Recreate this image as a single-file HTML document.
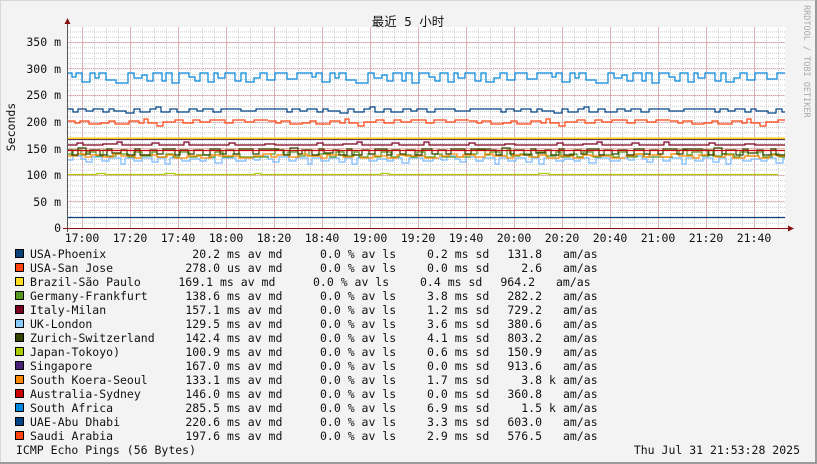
<!DOCTYPE html>
<html><head><meta charset="utf-8">
<style>
html,body{margin:0;padding:0;background:#f3f3f3;}
svg{display:block}
text{font-family:"DejaVu Sans Mono","Liberation Mono",monospace;font-size:11.5px;fill:#111}
</style></head><body>
<svg width="817" height="464" viewBox="0 0 817 464" xmlns="http://www.w3.org/2000/svg">
<defs>
<pattern id="hg" x="0" y="228" width="10" height="5.314" patternUnits="userSpaceOnUse">
<line x1="0" y1="0.5" x2="10" y2="0.5" stroke="#c8c8c8" stroke-width="1" stroke-dasharray="1,1"/>
</pattern>
<pattern id="vg" x="70" y="0" width="12" height="10" patternUnits="userSpaceOnUse">
<line x1="0.5" y1="0" x2="0.5" y2="10" stroke="#c8c8c8" stroke-width="1" stroke-dasharray="1,1"/>
</pattern>
<clipPath id="pc"><rect x="67" y="27" width="718" height="201"/></clipPath>
<path id="sa" d="M0 73 h5 v4 h4 v-4 h6 v9 h8 v-9 h5 v5 h4 v-5 h7 v7 h10 v3 h12 v-10 h6 v5 h8 v-3 h5 v6 h6 v-8 h9 v8 h4 v-8 h6 v10 h7 v-10 h10 v4 h6 v4 h5 v-8 h8 v9 h6 v-9 h4 v5 h7 v-5 h10 v8 h6 v-8 h5 v9 h8 v-4 h6 v-5 h7 v7 h8 v-7 h12 v6 h10 v-6 h10"/>
<path id="uae" d="M0 109 h6 v3 h5 v-3 h8 v2 h7 v-2 h10 v3 h6 v-3 h5 v2 h12 v2 h8 v-4 h6 v3 h10 v-3 h6 v-2 h5 v5 h9 v-3 h7 v3 h12 v-3 h8 v2 h6 v-2 h10 v3 h8 v-3 h20 v2 h15 v-2 h25"/>
<path id="sd" d="M0 121 h8 v2 h5 v-2 h9 v3 h12 v-1 h8 v-2 h6 v3 h14 v-3 h10 v2 h5 v-4 h4 v4 h9 v3 h6 v-4 h12 v-2 h8 v3 h10 v-3 h7 v2 h10 v-2 h15 v3 h8 v-3 h12 v2 h9 v-2 h14"/>
<path id="it" d="M0 145 h10 v-2 h6 v2 h20 v-1 h14 v-2 h5 v3 h30 v-2 h7 v2 h25 v-3 h5 v3 h40 v-2 h6 v2 h30 v-1 h10 v1 h32"/>
<path id="zu" d="M0 150 h5 v5 h6 v-7 h8 v6 h4 v-4 h10 v5 h7 v-6 h5 v4 h9 v-3 h6 v5 h8 v-6 h5 v6 h10 v-5 h7 v4 h6 v-5 h12 v6 h5 v-5 h8 v4 h6 v-4 h9 v5 h7 v-6 h10 v5 h6 v-4 h8 v4 h5 v-5 h14 v5 h6 v-5 h20"/>
<path id="ge" d="M0 154 h6 v-4 h8 v5 h5 v-3 h10 v4 h7 v-6 h4 v6 h9 v-2 h12 v3 h6 v-5 h8 v4 h10 v-4 h5 v5 h9 v-3 h7 v3 h6 v-5 h10 v5 h8 v-2 h12 v2 h6 v-5 h8 v5 h10 v-3 h7 v3 h29"/>
<path id="sk" d="M0 156 h10 v-2 h8 v3 h6 v-2 h12 v2 h10 v-3 h8 v2 h14 v2 h6 v-3 h16 v2 h10 v-2 h8 v3 h12 v-2 h14 v2 h10 v-3 h8 v1 h20 v2 h14"/>
<path id="uk" d="M0 160 h6 v-4 h8 v3 h5 v3 h6 v-5 h10 v4 h7 v-3 h12 v6 h4 v-6 h9 v3 h8 v-3 h10 v4 h6 v-4 h7 v6 h5 v-6 h12 v3 h8 v-2 h10 v2 h6 v-3 h9 v5 h7 v-5 h14 v3 h10 v-3 h8 v2"/>
</defs>
<rect x="0" y="0" width="817" height="464" fill="#f3f3f3"/>
<rect x="0.5" y="0.5" width="815" height="462" fill="none" stroke="#d8d8d8"/>
<line x1="0" y1="463" x2="817" y2="463" stroke="#9a9a9a" stroke-width="2"/>
<line x1="816" y1="0" x2="816" y2="464" stroke="#9a9a9a" stroke-width="2"/>
<rect x="67" y="27" width="718" height="201" fill="#ffffff"/>
<rect x="67" y="27" width="718" height="201" fill="url(#hg)"/>
<rect x="67" y="27" width="718" height="201" fill="url(#vg)"/>
<g stroke="#e8a0a0" stroke-width="1" stroke-dasharray="1,1">
<line x1="67" y1="201.5" x2="785" y2="201.5"/><line x1="67" y1="175.5" x2="785" y2="175.5"/><line x1="67" y1="148.5" x2="785" y2="148.5"/><line x1="67" y1="122.5" x2="785" y2="122.5"/><line x1="67" y1="95.5" x2="785" y2="95.5"/><line x1="67" y1="68.5" x2="785" y2="68.5"/><line x1="67" y1="42.5" x2="785" y2="42.5"/>
<line x1="82.5" y1="27" x2="82.5" y2="228"/><line x1="130.5" y1="27" x2="130.5" y2="228"/><line x1="178.5" y1="27" x2="178.5" y2="228"/><line x1="226.5" y1="27" x2="226.5" y2="228"/><line x1="274.5" y1="27" x2="274.5" y2="228"/><line x1="322.5" y1="27" x2="322.5" y2="228"/><line x1="370.5" y1="27" x2="370.5" y2="228"/><line x1="418.5" y1="27" x2="418.5" y2="228"/><line x1="466.5" y1="27" x2="466.5" y2="228"/><line x1="514.5" y1="27" x2="514.5" y2="228"/><line x1="562.5" y1="27" x2="562.5" y2="228"/><line x1="610.5" y1="27" x2="610.5" y2="228"/><line x1="658.5" y1="27" x2="658.5" y2="228"/><line x1="706.5" y1="27" x2="706.5" y2="228"/><line x1="754.5" y1="27" x2="754.5" y2="228"/>
</g>
<g clip-path="url(#pc)" fill="none" stroke-width="1.2">
<g transform="translate(67,0)" stroke="#0088dd"><use href="#sa"/><use href="#sa" x="240"/><use href="#sa" x="480"/><use href="#sa" x="720"/></g>
<g transform="translate(67,0)" stroke="#004488"><use href="#uae"/><use href="#uae" x="214"/><use href="#uae" x="428"/><use href="#uae" x="642"/></g>
<g transform="translate(67,0)" stroke="#ff4411"><use href="#sd"/><use href="#sd" x="201"/><use href="#sd" x="402"/><use href="#sd" x="603"/></g>
<line x1="67" y1="139.5" x2="785" y2="139.5" stroke="#4a2277"/>
<line x1="67" y1="138.3" x2="785" y2="138.3" stroke="#ffcc00" stroke-width="1.6"/>
<g transform="translate(67,0)" stroke="#800020"><use href="#it"/><use href="#it" x="240"/><use href="#it" x="480"/><use href="#it" x="720"/></g>
<g transform="translate(67,0)" stroke="#77bbff"><use href="#uk"/><use href="#uk" x="187"/><use href="#uk" x="374"/><use href="#uk" x="561"/></g>
<g transform="translate(67,0)" stroke="#559922"><use href="#ge"/><use href="#ge" x="202"/><use href="#ge" x="404"/><use href="#ge" x="606"/></g>
<g transform="translate(67,0)" stroke="#ff8800"><use href="#sk"/><use href="#sk" x="186"/><use href="#sk" x="372"/><use href="#sk" x="558"/></g>
<g transform="translate(67,0)" stroke="#334400"><use href="#zu"/><use href="#zu" x="212"/><use href="#zu" x="424"/><use href="#zu" x="636"/></g>
<line x1="67" y1="150.5" x2="785" y2="150.5" stroke="#cc0000"/>
<path d="M67 174.5 h30 v-1 h8 v1 h60 v-1 h10 v1 h80 v-1 h6 v1 h120 v-1 h8 v1 h150 v-1 h10 v1 h229" stroke="#aacc00"/>
<line x1="67" y1="217.5" x2="785" y2="217.5" stroke="#0a3f7a"/>
</g>
<line x1="67.5" y1="22" x2="67.5" y2="232" stroke="#555" stroke-width="1"/>
<line x1="63" y1="228.5" x2="790" y2="228.5" stroke="#881111" stroke-width="1"/>
<path d="M64.5 24 L67.5 18 L70.5 24 Z" fill="#881111"/>
<path d="M788 225.5 L794 228.5 L788 231.5 Z" fill="#881111"/>
<g text-anchor="end">
<text x="61" y="232">0</text>
<text x="61" y="206">50 m</text>
<text x="61" y="179">100 m</text>
<text x="61" y="153">150 m</text>
<text x="61" y="126">200 m</text>
<text x="61" y="99">250 m</text>
<text x="61" y="73">300 m</text>
<text x="61" y="46">350 m</text>
</g>
<g text-anchor="middle" style="font-size:11px">
<text x="82" y="242">17:00</text><text x="130" y="242">17:20</text><text x="178" y="242">17:40</text><text x="226" y="242">18:00</text><text x="274" y="242">18:20</text><text x="322" y="242">18:40</text><text x="370" y="242">19:00</text><text x="418" y="242">19:20</text><text x="466" y="242">19:40</text><text x="514" y="242">20:00</text><text x="562" y="242">20:20</text><text x="610" y="242">20:40</text><text x="658" y="242">21:00</text><text x="706" y="242">21:20</text><text x="754" y="242">21:40</text>
</g>
<text x="408" y="26" text-anchor="middle" style="font-family:'DejaVu Sans Mono','Noto Sans CJK SC',monospace;font-size:12.5px">最近 5 小时</text>
<text transform="translate(15,127) rotate(-90)" text-anchor="middle" style="font-size:11.5px">Seconds</text>
<text transform="translate(804,5) rotate(90)" style="font-size:8.5px;fill:#aaa">RRDTOOL / TOBI OETIKER</text>
<g stroke="#000" stroke-width="1">
<rect x="15.5" y="249.5" width="8" height="8" fill="#0a3f7a"/>
<rect x="15.5" y="263.5" width="8" height="8" fill="#ff4411"/>
<rect x="15.5" y="277.5" width="8" height="8" fill="#ffdd22"/>
<rect x="15.5" y="291.5" width="8" height="8" fill="#559922"/>
<rect x="15.5" y="305.5" width="8" height="8" fill="#7a0020"/>
<rect x="15.5" y="319.5" width="8" height="8" fill="#88ccff"/>
<rect x="15.5" y="333.5" width="8" height="8" fill="#334400"/>
<rect x="15.5" y="347.5" width="8" height="8" fill="#aacc00"/>
<rect x="15.5" y="361.5" width="8" height="8" fill="#4a2277"/>
<rect x="15.5" y="375.5" width="8" height="8" fill="#ff8800"/>
<rect x="15.5" y="389.5" width="8" height="8" fill="#cc0000"/>
<rect x="15.5" y="403.5" width="8" height="8" fill="#0088dd"/>
<rect x="15.5" y="417.5" width="8" height="8" fill="#004488"/>
<rect x="15.5" y="431.5" width="8" height="8" fill="#ff4411"/>
</g>
<g>
<text x="30" y="258">USA-Phoenix</text>
<text x="30" y="272">USA-San Jose</text>
<text x="30" y="286">Brazil-São Paulo</text>
<text x="30" y="300">Germany-Frankfurt</text>
<text x="30" y="314">Italy-Milan</text>
<text x="30" y="328">UK-London</text>
<text x="30" y="342">Zurich-Switzerland</text>
<text x="30" y="356">Japan-Tokoyo)</text>
<text x="30" y="370">Singapore</text>
<text x="30" y="384">South Koera-Seoul</text>
<text x="30" y="398">Australia-Sydney</text>
<text x="30" y="412">South Africa</text>
<text x="30" y="426">UAE-Abu Dhabi</text>
<text x="30" y="440">Saudi Arabia</text>
</g>
<g text-anchor="end">
<text x="220" y="258">20.2</text><text x="220" y="272">278.0</text><text x="213" y="286">169.1</text><text x="220" y="300">138.6</text><text x="220" y="314">157.1</text><text x="220" y="328">129.5</text><text x="220" y="342">142.4</text><text x="220" y="356">100.9</text><text x="220" y="370">167.0</text><text x="220" y="384">133.1</text><text x="220" y="398">146.0</text><text x="220" y="412">285.5</text><text x="220" y="426">220.6</text><text x="220" y="440">197.6</text>
</g>
<g>
<text x="227" y="258">ms av md</text><text x="227" y="272">us av md</text><text x="220" y="286">ms av md</text><text x="227" y="300">ms av md</text><text x="227" y="314">ms av md</text><text x="227" y="328">ms av md</text><text x="227" y="342">ms av md</text><text x="227" y="356">ms av md</text><text x="227" y="370">ms av md</text><text x="227" y="384">ms av md</text><text x="227" y="398">ms av md</text><text x="227" y="412">ms av md</text><text x="227" y="426">ms av md</text><text x="227" y="440">ms av md</text>
</g>
<g>
<text x="320" y="258">0.0 % av ls</text><text x="320" y="272">0.0 % av ls</text><text x="313" y="286">0.0 % av ls</text><text x="320" y="300">0.0 % av ls</text><text x="320" y="314">0.0 % av ls</text><text x="320" y="328">0.0 % av ls</text><text x="320" y="342">0.0 % av ls</text><text x="320" y="356">0.0 % av ls</text><text x="320" y="370">0.0 % av ls</text><text x="320" y="384">0.0 % av ls</text><text x="320" y="398">0.0 % av ls</text><text x="320" y="412">0.0 % av ls</text><text x="320" y="426">0.0 % av ls</text><text x="320" y="440">0.0 % av ls</text>
</g>
<g>
<text x="427" y="258">0.2 ms sd</text><text x="427" y="272">0.0 ms sd</text><text x="420" y="286">0.4 ms sd</text><text x="427" y="300">3.8 ms sd</text><text x="427" y="314">1.2 ms sd</text><text x="427" y="328">3.6 ms sd</text><text x="427" y="342">4.1 ms sd</text><text x="427" y="356">0.6 ms sd</text><text x="427" y="370">0.0 ms sd</text><text x="427" y="384">1.7 ms sd</text><text x="427" y="398">0.0 ms sd</text><text x="427" y="412">6.9 ms sd</text><text x="427" y="426">3.3 ms sd</text><text x="427" y="440">2.9 ms sd</text>
</g>
<g text-anchor="end">
<text x="542" y="258">131.8</text><text x="542" y="272">2.6</text><text x="535" y="286">964.2</text><text x="542" y="300">282.2</text><text x="542" y="314">729.2</text><text x="542" y="328">380.6</text><text x="542" y="342">803.2</text><text x="542" y="356">150.9</text><text x="542" y="370">913.6</text><text x="542" y="384">3.8</text><text x="542" y="398">360.8</text><text x="542" y="412">1.5</text><text x="542" y="426">603.0</text><text x="542" y="440">576.5</text>
</g>
<text x="549" y="384">k</text><text x="549" y="412">k</text>
<g>
<text x="563" y="258">am/as</text><text x="563" y="272">am/as</text><text x="556" y="286">am/as</text><text x="563" y="300">am/as</text><text x="563" y="314">am/as</text><text x="563" y="328">am/as</text><text x="563" y="342">am/as</text><text x="563" y="356">am/as</text><text x="563" y="370">am/as</text><text x="563" y="384">am/as</text><text x="563" y="398">am/as</text><text x="563" y="412">am/as</text><text x="563" y="426">am/as</text><text x="563" y="440">am/as</text>
</g>
<text x="16" y="454">ICMP Echo Pings (56 Bytes)</text>
<text x="800" y="454" text-anchor="end">Thu Jul 31 21:53:28 2025</text>
</svg>
</body></html>
